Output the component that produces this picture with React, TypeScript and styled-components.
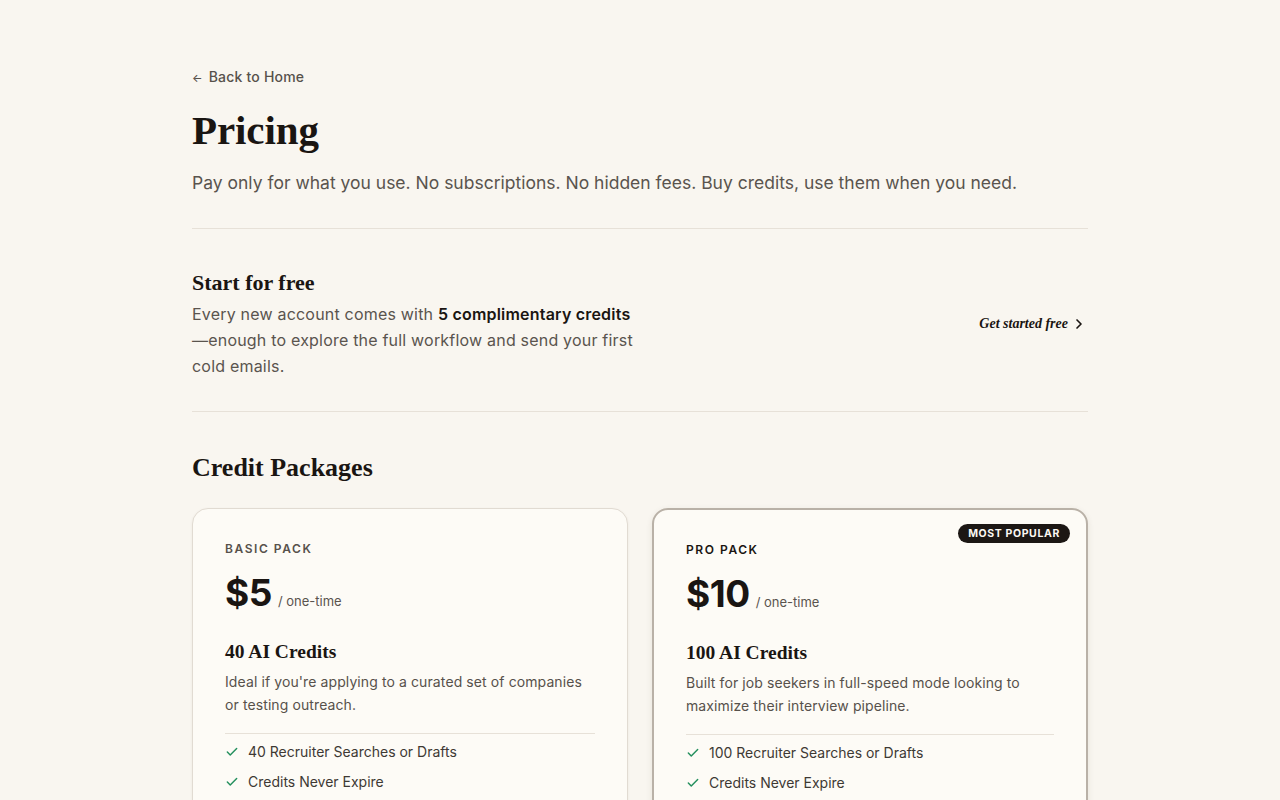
import React from "react";
import styled, { createGlobalStyle } from "styled-components";
import { Check, ChevronRight } from "lucide-react";

const Global = createGlobalStyle`
  html, body { margin: 0; padding: 0; background: #f9f6f0; }
  body { font-family: Inter, "Noto Sans", sans-serif; color: #1a1512; -webkit-font-smoothing: antialiased; }
  * { box-sizing: border-box; }
`;

const serif = `"Liberation Serif", "DejaVu Serif", serif`;

const Page = styled.div`
  min-height: 800px;
  background: #f9f6f0;
`;

const Container = styled.main`
  width: 896px;
  margin: 0 auto;
  padding: 66px 0 80px;
`;

const BackLink = styled.a`
  display: inline-flex;
  align-items: baseline;
  gap: 6px;
  font-size: 14px;
  line-height: 20px;
  font-weight: 500;
  letter-spacing: 0.2px;
  color: #57514b;
  text-decoration: none;
`;

const Arrow = styled.span`
  font-size: 11px;
`;

const Title = styled.h1`
  margin: 18px 0 0;
  font-family: ${serif};
  font-weight: 700;
  font-size: 41px;
  line-height: 48px;
  letter-spacing: -0.1px;
  color: #1a1512;
`;

const Lead = styled.p`
  margin: 15px 0 0;
  font-size: 17.5px;
  line-height: 28px;
  color: #5a544e;
`;

const Divider = styled.hr<{ $top?: number }>`
  border: 0;
  height: 1px;
  background: #e7e1d8;
  margin: ${(p) => p.$top ?? 0}px 0 0;
`;

const FreeRow = styled.section`
  display: flex;
  align-items: center;
  justify-content: space-between;
  padding: 40px 0 32px;
`;

const FreeText = styled.div`
  max-width: 448px;
`;

const H3 = styled.h3`
  margin: 0;
  font-family: ${serif};
  font-weight: 700;
  font-size: 22px;
  line-height: 28px;
  color: #1a1512;
`;

const FreeP = styled.p`
  margin: 4px 0 0;
  font-size: 16px;
  line-height: 26px;
  letter-spacing: 0.2px;
  color: #5a544e;
  strong { color: #1a1512; font-weight: 600; }
`;

const StartLink = styled.a`
  display: inline-flex;
  align-items: center;
  gap: 3px;
  padding: 8px 1px 8px 0;
  font-family: ${serif};
  font-style: italic;
  font-weight: 700;
  font-size: 14px;
  color: #1a1512;
  text-decoration: none;
`;

const H2 = styled.h2`
  margin: 39px 0 0;
  font-family: ${serif};
  font-weight: 700;
  font-size: 26px;
  line-height: 34px;
  color: #1a1512;
`;

const Grid = styled.div`
  display: grid;
  grid-template-columns: 1fr 1fr;
  gap: 24px;
  margin-top: 23px;
`;

const Card = styled.div<{ $featured?: boolean }>`
  position: relative;
  background: #fdfbf6;
  border: ${(p) => (p.$featured ? "2px solid #b9b1a7" : "1px solid #e1dbd2")};
  border-radius: 16px;
  padding: 32px;
  box-shadow: ${(p) =>
    p.$featured ? "0 2px 6px rgba(60, 45, 30, 0.1)" : "0 1px 3px rgba(60, 45, 30, 0.07)"};
`;

const Badge = styled.span`
  position: absolute;
  top: 14px;
  right: 16px;
  height: 19px;
  padding: 0 10px;
  border-radius: 999px;
  background: #1c1714;
  color: #fbf8f2;
  font-size: 10.5px;
  font-weight: 700;
  letter-spacing: 0.06em;
  line-height: 19px;
`;

const Label = styled.div<{ $dark?: boolean }>`
  font-size: 12px;
  line-height: 16px;
  font-weight: 600;
  letter-spacing: 0.13em;
  color: ${(p) => (p.$dark ? "#1a1512" : "#57514b")};
`;

const PriceRow = styled.div`
  display: flex;
  align-items: baseline;
  gap: 6px;
  margin-top: 16px;
`;

const Price = styled.span`
  font-size: 37px;
  line-height: 40px;
  font-weight: 700;
  letter-spacing: -0.5px;
  color: #1a1512;
`;

const Per = styled.span`
  font-size: 13px;
  color: #5a544e;
`;

const CardTitle = styled.h4`
  margin: 26px 0 0;
  font-family: ${serif};
  font-weight: 700;
  font-size: 19.5px;
  line-height: 25px;
  color: #1a1512;
`;

const CardDesc = styled.p`
  margin: 6px 0 0;
  font-size: 14px;
  line-height: 23px;
  letter-spacing: 0.1px;
  color: #57514b;
`;

const CardRule = styled.hr`
  border: 0;
  height: 1px;
  background: #e7e1d8;
  margin: 17px 0 8px;
`;

const Features = styled.ul`
  list-style: none;
  margin: 0;
  padding: 0;
  display: flex;
  flex-direction: column;
  gap: 10px;
`;

const Feature = styled.li`
  display: flex;
  align-items: center;
  gap: 9px;
  font-size: 14px;
  line-height: 20px;
  color: #3e3934;
  svg { flex: none; color: #24905e; }
`;

type Pack = {
  label: string;
  price: string;
  credits: string;
  desc: string;
  features: string[];
  featured?: boolean;
};

const packs: Pack[] = [
  {
    label: "BASIC PACK",
    price: "$5",
    credits: "40 AI Credits",
    desc: "Ideal if you're applying to a curated set of companies or testing outreach.",
    features: ["40 Recruiter Searches or Drafts", "Credits Never Expire", "Full Workflow Access"],
  },
  {
    label: "PRO PACK",
    price: "$10",
    credits: "100 AI Credits",
    desc: "Built for job seekers in full-speed mode looking to maximize their interview pipeline.",
    features: ["100 Recruiter Searches or Drafts", "Credits Never Expire", "Full Workflow Access"],
    featured: true,
  },
];

export default function App() {
  return (
    <Page>
      <Global />
      <Container>
        <BackLink href="#">
          <Arrow>←</Arrow>Back to Home
        </BackLink>
        <Title>Pricing</Title>
        <Lead>
          Pay only for what you use. No subscriptions. No hidden fees. Buy credits, use them when you need.
        </Lead>
        <Divider $top={31} />
        <FreeRow>
          <FreeText>
            <H3>Start for free</H3>
            <FreeP>
              Every new account comes with <strong>5 complimentary credits</strong>—enough to explore the full
              workflow and send your first cold emails.
            </FreeP>
          </FreeText>
          <StartLink href="#">
            Get started free
            <ChevronRight size={16} strokeWidth={2.5} />
          </StartLink>
        </FreeRow>
        <Divider />
        <H2>Credit Packages</H2>
        <Grid>
          {packs.map((p) => (
            <Card key={p.label} $featured={p.featured}>
              {p.featured && <Badge>MOST POPULAR</Badge>}
              <Label $dark={p.featured}>{p.label}</Label>
              <PriceRow>
                <Price>{p.price}</Price>
                <Per>/ one-time</Per>
              </PriceRow>
              <CardTitle>{p.credits}</CardTitle>
              <CardDesc>{p.desc}</CardDesc>
              <CardRule />
              <Features>
                {p.features.map((f) => (
                  <Feature key={f}>
                    <Check size={14} strokeWidth={2.5} />
                    {f}
                  </Feature>
                ))}
              </Features>
            </Card>
          ))}
        </Grid>
      </Container>
    </Page>
  );
}
